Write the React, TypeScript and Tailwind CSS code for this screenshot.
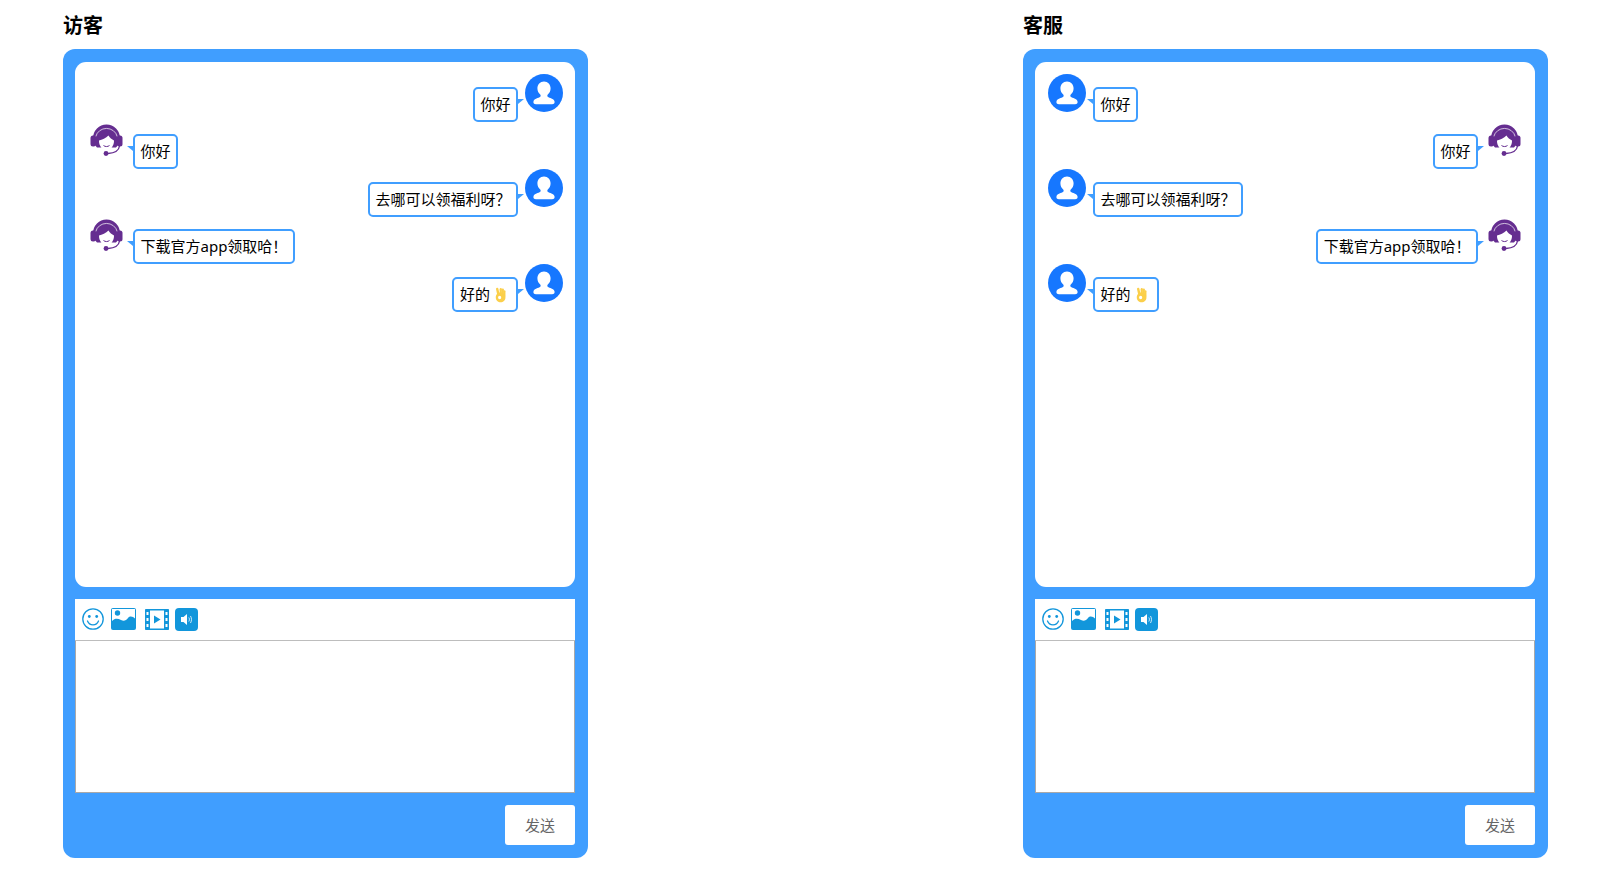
const FONT = "font-['Noto_Sans','Noto_Sans_CJK_SC',sans-serif]";

function UserAvatar({ className = "" }: { className?: string }) {
  return (
    <svg viewBox="0 0 38 38" className={"w-[38px] h-[38px] shrink-0 " + className}>
      <circle cx="19" cy="19" r="19" fill="#1677ff" />
      <path
        d="M19 7.500c-3.900 0-6.600 3-6.600 6.800 0 2.700 1.200 4.900 2.800 6.300.6.600.7 1.800-.1 2.400-1.500 1-5.900 1.500-6.600 4.200-.5 1.900.6 3 2.500 3h16c1.900 0 3-1.100 2.500-3-.7-2.700-5.100-3.200-6.600-4.200-.8-.6-.7-1.800-.1-2.400 1.600-1.400 2.800-3.600 2.800-6.300 0-3.800-2.700-6.800-6.600-6.800z"
        fill="#fff"
      />
    </svg>
  );
}

function AgentAvatar() {
  return (
    <div className="w-[38px] h-[38px] shrink-0 flex items-center justify-center">
      <svg viewBox="0 0 33 33" className="w-[33px] h-[33px]">
        <path d="M3 14.500A13.500 14 0 0 1 30 14.500C30 18 28.500 21 26 23.500L7 23.500C4.500 21 3 18 3 14.500z" fill="#652d90" />
        <path d="M5.800 12.500A11 10.500 0 0 1 27.200 12.500" fill="none" stroke="#fff" strokeWidth="0.700" />
        <rect x="0.500" y="11.500" width="5.500" height="11" rx="2.500" fill="#652d90" />
        <rect x="27" y="11.500" width="5.500" height="11" rx="2.500" fill="#652d90" />
        <path d="M9 16.500C12 16 16 14 18.500 11.500C19.500 13.500 22 15.500 24 16.500C24.300 21.500 20.500 26.500 16.500 26.500C12.500 26.500 8.700 21.500 9 16.500z" fill="#fff" />
        <path d="M13.500 21.500c1.800 1.400 4.200 1.400 6 0" fill="none" stroke="#652d90" strokeWidth="1" />
        <path d="M29.500 22c-.5 4-4.500 7-11.500 7.500" fill="none" stroke="#652d90" strokeWidth="1.300" />
        <circle cx="16" cy="29.500" r="2.400" fill="#652d90" />
      </svg>
    </div>
  );
}

function OkHand() {
  return (
    <svg viewBox="0 0 16 16" className="inline-block w-[15.5px] h-[16px] ml-[5px] align-[-3px]">
      <rect x="1.500" y="0.500" width="2.500" height="7" rx="1.250" fill="#fbcf4a" transform="rotate(-12 3 4)" />
      <rect x="4.800" y="0.800" width="2.300" height="8" rx="1.150" fill="#fbcf4a" />
      <rect x="6.900" y="1.300" width="2.300" height="8" rx="1.150" fill="#fbcf4a" />
      <rect x="8.800" y="3" width="2" height="7" rx="1" fill="#fbcf4a" />
      <path
        d="M5.500 5.500c3 0 5.300 2.200 5.300 5 0 2.900-2.300 5-5 5S.8 13.400.8 10.500c0-2.800 2-5 4.700-5zM4.800 8.800c-.9 0-1.600.8-1.600 1.800s.7 1.800 1.600 1.800 1.600-.8 1.600-1.800-.7-1.800-1.600-1.800z"
        fill="#fbcf4a"
        fillRule="evenodd"
      />
    </svg>
  );
}

type Msg = { text: string; from: "user" | "agent"; hand?: boolean };

const messages: Msg[] = [
  { text: "你好", from: "user" },
  { text: "你好", from: "agent" },
  { text: "去哪可以领福利呀？", from: "user" },
  { text: "下载官方app领取哈！", from: "agent" },
  { text: "好的", from: "user", hand: true },
];

function Row({ msg, mine }: { msg: Msg; mine: boolean }) {
  const bubble = (
    <div className="relative mt-[13px] h-[35px] border-2 border-[#409eff] rounded-[5px] px-[5.5px] text-[15px] leading-[31.6px] text-black whitespace-nowrap bg-white">
      {msg.text}
      {msg.hand && <OkHand />}
      {mine ? (
        <span className="absolute right-[-8px] top-[10px] w-0 h-0 border-t-[5px] border-t-[#409eff] border-r-[6px] border-r-transparent" />
      ) : (
        <span className="absolute left-[-8px] top-[10px] w-0 h-0 border-t-[5px] border-t-[#409eff] border-l-[6px] border-l-transparent" />
      )}
    </div>
  );
  if (mine) {
    return (
      <div className="flex justify-end gap-[7px] h-[47.4px]">
        {bubble}
        {msg.from === "user" ? <UserAvatar /> : <AgentAvatar />}
      </div>
    );
  }
  return (
    <div className="flex justify-start h-[47.4px]">
      {msg.from === "user" ? <UserAvatar className="ml-[1px] mr-[7px]" /> : <div className="mr-[8px]"><AgentAvatar /></div>}
      {bubble}
    </div>
  );
}

function Toolbar() {
  return (
    <div className="h-[42px] bg-white border-b border-[#bdbdbd] flex items-center pl-[7px] pb-[1px]">
      <svg viewBox="0 0 22 22" className="w-[22px] h-[22px]">
        <circle cx="11" cy="11" r="10.200" fill="none" stroke="#1296db" strokeWidth="1.300" />
        <circle cx="7.300" cy="8.500" r="1.400" fill="#1296db" />
        <circle cx="14.700" cy="8.500" r="1.400" fill="#1296db" />
        <path d="M5.500 13c1 2.600 3 3.800 5.500 3.800s4.500-1.200 5.500-3.800" fill="none" stroke="#1296db" strokeWidth="1.300" strokeLinecap="round" />
      </svg>
      <svg viewBox="0 0 25 22" className="w-[25px] h-[22px] ml-[7px]">
        <rect x="0" y="0" width="25" height="22" rx="2" fill="#1296db" />
        <rect x="1" y="1" width="23" height="12" fill="#fff" />
        <circle cx="6.500" cy="5" r="2.700" fill="#1296db" />
        <path d="M1 13c3-3 6-2.500 9-1 3 1.500 5 .5 7-2 2-2.500 5-1.500 7 .5V14H1z" fill="#1296db" />
      </svg>
      <svg viewBox="0 0 24 21" className="w-[24px] h-[21px] ml-[9px]">
        <rect x="0.800" y="0.800" width="22.400" height="19.400" rx="1.500" fill="#fff" stroke="#1296db" strokeWidth="1.600" />
        <rect x="0" y="0" width="5" height="21" rx="1" fill="#1296db" />
        <rect x="19" y="0" width="5" height="21" rx="1" fill="#1296db" />
        <rect x="1.500" y="3" width="2" height="3" fill="#fff" />
        <rect x="1.500" y="9" width="2" height="3" fill="#fff" />
        <rect x="1.500" y="15" width="2" height="3" fill="#fff" />
        <rect x="20.500" y="3" width="2" height="3" fill="#fff" />
        <rect x="20.500" y="9" width="2" height="3" fill="#fff" />
        <rect x="20.500" y="15" width="2" height="3" fill="#fff" />
        <path d="M9 6.500v8l6.500-4z" fill="#1296db" />
      </svg>
      <svg viewBox="0 0 23 23" className="w-[23px] h-[23px] ml-[6px]">
        <rect width="23" height="23" rx="4" fill="#1296db" />
        <path d="M6 9h2.500L12 6v11l-3.500-3H6z" fill="#fff" />
        <path d="M13.800 9.500c.8 1.200.8 2.800 0 4M15.500 8c1.300 2 1.300 5 0 7" fill="none" stroke="#fff" strokeWidth="0.800" />
      </svg>
    </div>
  );
}

function Panel({ title, me, className }: { title: string; me: "user" | "agent"; className: string }) {
  return (
    <div className={"w-[525px] shrink-0 " + className}>
      <h2 className="h-[49px] pt-[12px] text-[20px] leading-[28px] font-bold text-black">{title}</h2>
      <div className="bg-[#409eff] rounded-[12px] pl-[12px] pr-[13px] py-[13px]">
        <div className="h-[525px] bg-white rounded-[11px] px-[12px] pt-[12px]">
          {messages.map((m, i) => (
            <Row key={i} msg={m} mine={m.from === me} />
          ))}
        </div>
        <div className="mt-[12px]">
          <Toolbar />
          <textarea className="block w-full h-[152px] bg-white border border-t-0 border-[#a9a9a9] resize-none outline-none" />
        </div>
        <div className="mt-[12px] flex justify-end">
          <button className="w-[70px] h-[40px] bg-white rounded-[3px] text-[15px] text-[#666]">发送</button>
        </div>
      </div>
    </div>
  );
}

export default function App() {
  return (
    <div className={"flex w-[1602px] h-[889px] bg-white pl-[63px] " + FONT}>
      <Panel title="访客" me="user" className="" />
      <Panel title="客服" me="agent" className="ml-[435px]" />
    </div>
  );
}
